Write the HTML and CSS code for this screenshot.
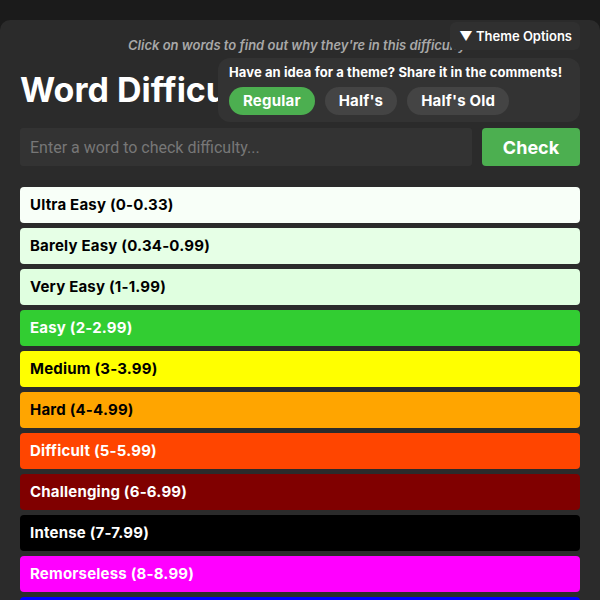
FILE: index.html
```html
<!DOCTYPE html>
<html>
<head>
<meta charset="utf-8">
<link rel="stylesheet" href="styles.css">
</head>
<body>
<div class="container">
  <p class="subtitle">Click on words to find out why they're in this difficulty level.</p>
  <h1 class="title">Word Difficulty Levels</h1>
  <div class="search">
    <input class="word-input" type="text" placeholder="Enter a word to check difficulty...">
    <button class="check-btn">Check</button>
  </div>
  <ul class="levels">
    <li class="level l1">Ultra Easy (0-0.33)</li>
    <li class="level l2">Barely Easy (0.34-0.99)</li>
    <li class="level l3">Very Easy (1-1.99)</li>
    <li class="level l4">Easy (2-2.99)</li>
    <li class="level l5">Medium (3-3.99)</li>
    <li class="level l6">Hard (4-4.99)</li>
    <li class="level l7">Difficult (5-5.99)</li>
    <li class="level l8">Challenging (6-6.99)</li>
    <li class="level l9">Intense (7-7.99)</li>
    <li class="level l10">Remorseless (8-8.99)</li>
  </ul>
  <div class="theme">
    <div class="theme-summary">▼ Theme Options</div>
    <div class="theme-panel">
      <div class="theme-note">Have an idea for a theme? Share it in the comments!</div>
      <div class="theme-buttons">
        <span class="theme-btn active">Regular</span>
        <span class="theme-btn">Half's</span>
        <span class="theme-btn">Half's Old</span>
      </div>
    </div>
  </div>
</div>
</body>
</html>
```
FILE: styles.css
```css
html, body {
  margin: 0;
  padding: 0;
  background: #1b1b1b;
  font-family: Inter, "Liberation Sans", sans-serif;
  overflow: hidden;
}
body {
  padding-top: 20px;
  height: 600px;
  box-sizing: border-box;
}
.container {
  position: relative;
  background: #2b2b2b;
  border-radius: 10px 10px 0 0;
  padding: 16px 20px 0;
  width: 600px;
  height: 580px;
  box-sizing: border-box;
  overflow: hidden;
}
.subtitle {
  margin: 0;
  padding-left: 108px;
  white-space: nowrap;
  font-size: 13px;
  font-style: italic;
  font-weight: 600;
  color: #a8a8a8;
  line-height: 18px;
}
.title {
  margin: 16px 0 0;
  font-size: 34px;
  font-weight: 700;
  color: #fff;
  line-height: 40px;
  white-space: nowrap;
}
.search {
  display: flex;
  gap: 10px;
  margin-top: 18px;
}
.word-input {
  flex: 1;
  height: 38px;
  box-sizing: border-box;
  background: #333;
  border: none;
  border-radius: 3px;
  padding: 0 10px;
  font-family: Roboto, "Liberation Sans", sans-serif;
  font-size: 16px;
  color: #ddd;
}
.word-input::placeholder {
  color: #777;
}
.check-btn {
  width: 98px;
  height: 38px;
  background: #4caf50;
  border: none;
  border-radius: 4px;
  color: #fff;
  font-family: Inter, "Liberation Sans", sans-serif;
  font-weight: 700;
  font-size: 18px;
}
.levels {
  list-style: none;
  margin: 21px 0 0;
  padding: 0;
  display: flex;
  flex-direction: column;
  gap: 5px;
}
.level {
  flex: none;
  height: 36px;
  line-height: 36px;
  padding-left: 10px;
  border-radius: 4px;
  font-size: 15px;
  font-weight: 700;
  letter-spacing: 0.2px;
  color: #000;
}
.l1 { background: #f8fff8; }
.l2 { background: #e6ffe6; }
.l3 { background: #e0ffe0; }
.l4 { background: #32cd32; color: #fff; }
.l5 { background: #ffff00; }
.l6 { background: #ffa500; }
.l7 { background: #ff4500; color: #fff; }
.l8 { background: #800000; color: #fff; }
.l9 { background: #000; color: #fff; }
.l10 { background: #ff00ff; color: #fff; }
.levels::after {
  content: "";
  flex: none;
  height: 36px;
  border-radius: 4px;
  background: #0000ff;
}
.theme {
  position: absolute;
  top: 2px;
  right: 20px;
  display: flex;
  flex-direction: column;
  align-items: flex-end;
  gap: 8px;
}
.theme-summary {
  background: #303030;
  border-radius: 6px;
  padding: 1px 8px 1px 9px;
  height: 26px;
  line-height: 26px;
  font-size: 13px;
  font-weight: 600;
  color: #fff;
  white-space: nowrap;
}
.theme-panel {
  background: #333;
  border-radius: 12px;
  padding: 5px 11px 7px;
  width: 362px;
  box-sizing: border-box;
}
.theme-note {
  font-size: 13px;
  font-weight: 700;
  letter-spacing: 0.1px;
  color: #fff;
  line-height: 18px;
  white-space: nowrap;
}
.theme-buttons {
  display: flex;
  gap: 10px;
  margin-top: 6px;
}
.theme-btn {
  background: #444;
  border-radius: 14px;
  height: 28px;
  line-height: 28px;
  padding: 0 14px;
  font-size: 15px;
  font-weight: 700;
  letter-spacing: 0.2px;
  color: #fff;
}
.theme-btn.active {
  background: #4caf50;
}
```
